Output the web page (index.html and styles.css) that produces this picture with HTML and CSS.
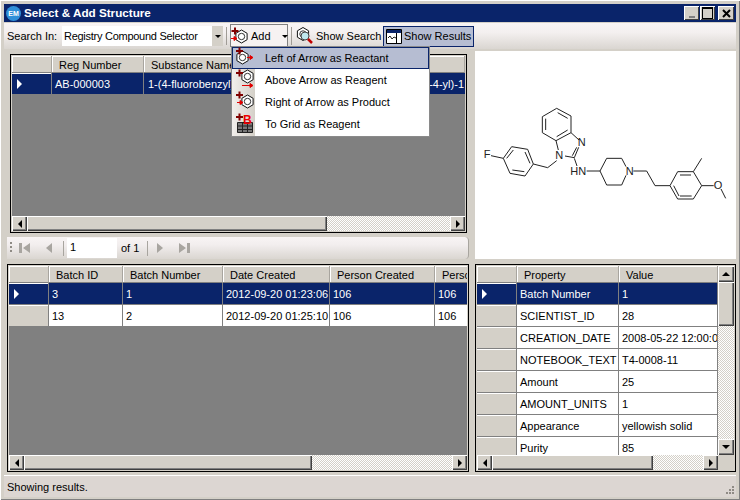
FILE: index.html
```html
<!DOCTYPE html>
<html lang="en">
<head>
    <meta charset="UTF-8">
    <title>Select &amp; Add Structure</title>
    <link rel="stylesheet" href="styles.css">
</head>
<body>
<svg class="defs" width="0" height="0">
    <defs>
        <g id="hex">
            <polygon points="0,-6.500 5.600,-3.200 5.600,3.200 0,6.500 -5.600,3.200 -5.600,-3.200" fill="#fff" stroke="#111"/>
            <circle r="3.200" fill="none" stroke="#333"/>
        </g>
        <path id="plus" d="M-3.500 0h7M0 -3.500v7" stroke="#800000" stroke-width="2" fill="none"/>
    </defs>
</svg>
<div class="window">
    <div class="titlebar">
        <span class="app-icon">EM</span>
        <span class="title-text">Select &amp; Add Structure</span>
        <span class="win-btn win-min"></span>
        <span class="win-btn win-max"></span>
        <span class="win-btn win-close">
            <svg width="9" height="9"><path d="M1 1l7 7M8 1l-7 7" stroke="#000" stroke-width="2"/></svg>
        </span>
    </div>

    <div class="toolbar">
        <span class="search-label">Search In:</span>
        <div class="combo">
            <span class="combo-text">Registry Compound Selector</span>
            <span class="combo-btn"><i class="tri-small"></i></span>
        </div>
        <span class="tool-sep"></span>
        <div class="add-wrap">
            <div class="add-btn">
                <svg width="20" height="20">
                    <use href="#hex" x="10.500" y="10.500"/><use href="#plus" x="4" y="5"/>
                    <path d="M0 12.500h4M3 10.500l3 2-3 2z" stroke="#e00000" fill="#e00000"/>
                </svg>
                <span>Add</span>
                <i class="tri-small"></i>
            </div>
            <ul class="menu">
                <li class="menu-item selected">
                    <svg width="20" height="20">
                        <use href="#hex" x="8.500" y="10.500"/><use href="#plus" x="5.500" y="4"/>
                        <path d="M13 10.500h4M16 8.500l3 2-3 2z" stroke="#e00000" fill="#e00000"/>
                    </svg>
                    <span>Left of Arrow as Reactant</span>
                </li>
                <li class="menu-item">
                    <svg width="20" height="20">
                        <use href="#hex" x="13.500" y="7.500"/><use href="#plus" x="5.500" y="4"/>
                        <path d="M8 16.500h9M16 14.500l3 2-3 2z" stroke="#e00000" fill="#e00000"/>
                    </svg>
                    <span>Above Arrow as Reagent</span>
                </li>
                <li class="menu-item">
                    <svg width="20" height="20">
                        <use href="#hex" x="13.500" y="10.500"/><use href="#plus" x="5.500" y="4"/>
                        <path d="M3 11.500h4M6 9.500l3 2-3 2z" stroke="#e00000" fill="#e00000"/>
                    </svg>
                    <span>Right of Arrow as Product</span>
                </li>
                <li class="menu-item">
                    <svg width="20" height="20">
                        <path d="M3.500 9.500h15v10h-15zM3.500 13h15M3.500 16.500h15M8.500 9.500v10M13.500 9.500v10" fill="#777" stroke="#222"/>
                        <use href="#plus" x="5.500" y="4"/>
                        <text class="icon-b" x="9" y="11">B</text>
                    </svg>
                    <span>To Grid as Reagent</span>
                </li>
            </ul>
        </div>
        <span class="tool-sep sep-after-add"></span>
        <div class="tool-btn show-search">
            <svg width="18" height="20">
                <use href="#hex" x="7" y="8"/>
                <circle cx="9" cy="10" r="4" fill="#bfe8ee" stroke="#444"/>
                <path d="M12 13l4 4" stroke="#c00000" stroke-width="2.500"/>
            </svg>
            <span>Show Search</span>
        </div>
        <div class="tool-btn show-results">
            <svg width="16" height="15">
                <path d="M.5 .5h15v14h-15z" fill="#fff" stroke="#000"/>
                <path d="M1 1h14v3h-14z" fill="#0a246a"/>
                <path d="M10.500 4v10" stroke="#000"/>
                <path d="M2 9l2-2 2 3 2-2 2 1" stroke="#222" fill="none"/>
            </svg>
            <span>Show Results</span>
        </div>
    </div>

    <div class="panes">
        <div class="left-top">
            <div class="datagrid grid-top">
                <div class="grid-view">
                    <div class="rows">
                        <div class="row head">
                            <div class="hcell"></div>
                            <div class="hcell">Reg Number</div>
                            <div class="hcell">Substance Name</div>
                        </div>
                        <div class="row selected">
                            <div class="rowhead"></div>
                            <div class="cell">AB-000003</div>
                            <div class="cell cell-split"><span>1-(4-fluorobenzyl)-</span><span>n-4-yl)-1</span></div>
                        </div>
                    </div>
                    <div class="hscroll">
                        <span class="sb-btn"><i class="tri-left"></i></span>
                        <span class="sb-thumb thumb-top"></span>
                        <span class="sb-track"></span>
                        <span class="sb-btn"><i class="tri-right"></i></span>
                    </div>
                </div>
            </div>
            <div class="pager">
                <span class="grip"></span>
                <svg class="pg-icon" width="11" height="12"><path d="M0 1h3v10h-3zM11 1v10l-7-5z" fill="#a8a5a0"/></svg>
                <svg class="pg-icon pg-prev" width="8" height="12"><path d="M7 1v10l-6-5z" fill="#a8a5a0"/></svg>
                <span class="pg-sep"></span>
                <span class="pg-input">1</span>
                <span class="pg-of">of 1</span>
                <span class="pg-sep pg-sep2"></span>
                <svg class="pg-icon pg-next" width="7" height="12"><path d="M0 1v10l6-5z" fill="#a8a5a0"/></svg>
                <svg class="pg-icon pg-last" width="11" height="12"><path d="M0 1v10l7-5zM8 1h3v10h-3z" fill="#a8a5a0"/></svg>
            </div>
        </div>

        <div class="structure">
            <svg class="molecule" width="259" height="130" viewBox="0 0 777 390">
                <g class="bonds">
                    <path d="M245 55L288 78L288 128L243 152L202 128L202 80Z"/>
                    <path d="M248 68L278 85M278 120L245 140M212 120L212 86"/>
                    <path d="M288 128L312 150M311 172L298 203L270 198M243 152L250 180M292 197L305 172"/>
                    <path d="M298 205L306 228M335 243L375 243L395 205L440 205L453 230M375 243L395 285L440 285L453 256"/>
                    <path d="M475 243L515 243L540 287L585 287L608 245L655 245L680 287L655 327L608 327L585 287"/>
                    <path d="M615 255L648 255M650 318L615 318M596 287L612 318M655 245L680 205M680 287L716 287M738 297L752 325"/>
                    <path d="M245 212L218 233L175 222L150 258L105 250L85 205L110 170L158 178L175 222"/>
                    <path d="M148 245L112 240M95 205L115 180M150 186L165 220M48 197L85 205"/>
                </g>
                <text x="308" y="169">N</text>
                <text x="241" y="208">N</text>
                <text x="286" y="254">HN</text>
                <text x="452" y="254">N</text>
                <text x="716" y="296">O</text>
                <text x="26" y="204">F</text>
            </svg>
        </div>

        <div class="datagrid grid-batch">
            <div class="grid-view">
                <div class="rows">
                    <div class="row head">
                        <div class="hcell"></div>
                        <div class="hcell">Batch ID</div>
                        <div class="hcell">Batch Number</div>
                        <div class="hcell">Date Created</div>
                        <div class="hcell">Person Created</div>
                        <div class="hcell">Person Modified</div>
                    </div>
                    <div class="row selected">
                        <div class="rowhead"></div>
                        <div class="cell">3</div>
                        <div class="cell">1</div>
                        <div class="cell">2012-09-20 01:23:06</div>
                        <div class="cell">106</div>
                        <div class="cell">106</div>
                    </div>
                    <div class="row">
                        <div class="rowhead"></div>
                        <div class="cell">13</div>
                        <div class="cell">2</div>
                        <div class="cell">2012-09-20 01:25:10</div>
                        <div class="cell">106</div>
                        <div class="cell">106</div>
                    </div>
                </div>
                <div class="hscroll">
                    <span class="sb-btn"><i class="tri-left"></i></span>
                    <span class="sb-thumb thumb-batch"></span>
                    <span class="sb-track"></span>
                    <span class="sb-btn"><i class="tri-right"></i></span>
                </div>
            </div>
        </div>

        <div class="datagrid grid-props">
            <div class="grid-view">
                <div class="props-body">
                    <div class="rows">
                        <div class="row head">
                            <div class="hcell"></div>
                            <div class="hcell">Property</div>
                            <div class="hcell">Value</div>
                        </div>
                        <div class="row selected"><div class="rowhead"></div><div class="cell">Batch Number</div><div class="cell">1</div></div>
                        <div class="row"><div class="rowhead"></div><div class="cell">SCIENTIST_ID</div><div class="cell">28</div></div>
                        <div class="row"><div class="rowhead"></div><div class="cell">CREATION_DATE</div><div class="cell">2008-05-22 12:00:00</div></div>
                        <div class="row"><div class="rowhead"></div><div class="cell">NOTEBOOK_TEXT</div><div class="cell">T4-0008-11</div></div>
                        <div class="row"><div class="rowhead"></div><div class="cell">Amount</div><div class="cell">25</div></div>
                        <div class="row"><div class="rowhead"></div><div class="cell">AMOUNT_UNITS</div><div class="cell">1</div></div>
                        <div class="row"><div class="rowhead"></div><div class="cell">Appearance</div><div class="cell">yellowish solid</div></div>
                        <div class="row"><div class="rowhead"></div><div class="cell">Purity</div><div class="cell">85</div></div>
                    </div>
                    <div class="vscroll">
                        <span class="sb-btn"><i class="tri-up"></i></span>
                        <span class="sb-thumb thumb-props"></span>
                        <span class="sb-track"></span>
                        <span class="sb-btn"><i class="tri-down"></i></span>
                    </div>
                </div>
                <div class="props-foot">
                    <div class="hscroll">
                        <span class="sb-btn"><i class="tri-left"></i></span>
                        <span class="sb-thumb thumb-props-h"></span>
                        <span class="sb-track"></span>
                        <span class="sb-btn"><i class="tri-right"></i></span>
                    </div>
                    <span class="sb-corner"></span>
                </div>
            </div>
        </div>
    </div>

    <div class="statusbar">
        <span>Showing results.</span>
        <svg class="size-grip" width="12" height="12">
            <path d="M9 1h2v2h-2zM6 4h2v2h-2zM9 4h2v2h-2zM3 7h2v2h-2zM6 7h2v2h-2zM9 7h2v2h-2z" fill="#8f8b85"/>
        </svg>
    </div>
</div>
</body>
</html>
```

FILE: styles.css
```css
*{
    margin:0;
    padding:0;
    box-sizing:border-box;
}
body{
    background:#d4d0c8;
    font-family:"Liberation Sans",Arial,sans-serif;
    font-size:11px;
    color:#000;
}
ul{
    list-style:none;
}
.defs{
    position:absolute;
}
.window{
    width:740px;
    height:500px;
    padding:4px 4px 3px;
    background:#d4d0c8;
    display:flex;
    flex-direction:column;
    position:relative;
    box-shadow:inset 1px 1px 0 #fff,inset -1px -1px 0 #808080;
    overflow:hidden;
}

/* title bar */
.titlebar{
    height:18px;
    flex:none;
    background:#0a246a;
    color:#fff;
    display:flex;
    align-items:center;
    padding:0 2px;
}
.app-icon{
    width:15px;
    height:15px;
    border-radius:50%;
    background:#2f8fd8;
    color:#fff;
    font-size:7px;
    font-weight:bold;
    line-height:15px;
    text-align:center;
    margin-right:3px;
}
.title-text{
    font-weight:bold;
    font-size:11.7px;
    flex:1;
    padding-bottom:2px;
}
.win-btn{
    width:15px;
    height:14px;
    margin-left:1px;
    background:#d4d0c8;
    box-shadow:inset 1px 1px 0 #fff,inset -1px -1px 0 #404040;
    display:flex;
    align-items:center;
    justify-content:center;
    position:relative;
}
.win-min::after{
    content:"";
    width:6px;
    height:2px;
    background:#808080;
    margin-top:7px;
}
.win-max::after{
    content:"";
    width:9px;
    height:9px;
    border:1px solid #000;
    border-top-width:2px;
}
.win-close{
    width:16px;
    margin-left:3px;
}

/* toolbar */
.toolbar{
    height:26px;
    flex:none;
    margin-top:1px;
    padding-left:3px;
    display:flex;
    align-items:center;
    background:linear-gradient(#f8f4f4,#f4f0f0 35%,#dad6d1);
}
.toolbar svg{
    flex:none;
}
.search-label{
    width:55px;
}
.combo{
    width:161px;
    height:20px;
    display:flex;
    background:#fff;
}
.combo-text{
    flex:1;
    line-height:20px;
    padding-left:2px;
    letter-spacing:-.27px;
    white-space:nowrap;
}
.combo-btn{
    width:11px;
    background:#d4d0c8;
    display:flex;
    align-items:center;
    justify-content:center;
}
.tool-sep{
    width:1px;
    height:18px;
    background:#a09c96;
    margin:0 3px;
}
.add-wrap{
    position:relative;
    height:23px;
    align-self:flex-end;
    margin-bottom:2px;
}
.add-btn{
    width:58px;
    height:23px;
    border:1px solid #808080;
    border-bottom:none;
    background:#f6f2f2;
    display:flex;
    align-items:center;
}
.add-btn .tri-small{
    margin-left:11px;
}
.sep-after-add{
    margin:0 4px 0 3px;
}
.tool-btn{
    height:21px;
    display:flex;
    align-items:center;
    gap:2px;
    white-space:nowrap;
}
.show-search{
    width:83px;
    margin-right:4px;
}
.show-results{
    border:1px solid #0a246a;
    background:#b6bdd2;
    padding-left:2px;
    width:91px;
}

/* dropdown menu */
.menu{
    position:absolute;
    left:1px;
    top:22px;
    width:199px;
    height:91px;
    background:linear-gradient(90deg,#f2efec,#d4d0c8 23px,#fff 23px);
    border:1px solid #8a8a8a;
    z-index:5;
}
.menu-item{
    height:22px;
    display:flex;
    align-items:center;
    white-space:nowrap;
    border:1px solid transparent;
}
.menu-item svg{
    width:23px;
    height:22px;
    padding-left:1px;
    margin-right:9px;
    flex:none;
}
.menu-item.selected{
    background:#b6bdd2;
    border-color:#0a246a;
}
.icon-b{
    font-family:"Liberation Sans",Arial,sans-serif;
    font-size:12px;
    font-weight:bold;
    fill:#ee0000;
}

/* panes */
.panes{
    flex:none;
    margin:2px 0 0 3px;
    display:grid;
    grid-template-columns:462px 261px;
    grid-template-rows:208px 208px;
    column-gap:6px;
    row-gap:5px;
}
.left-top{
    display:flex;
    flex-direction:column;
    padding-top:3px;
}
.structure{
    background:#fff;
    padding-top:39px;
}
.molecule{
    display:block;
}
.bonds path{
    fill:none;
    stroke:#222;
    stroke-width:3;
}
.molecule text{
    font-family:"Liberation Sans",Arial,sans-serif;
    font-size:33px;
    fill:#222;
}

/* data grids */
.datagrid{
    border:1px solid #000;
    padding:1px;
    background:#d4d0c8;
}
.grid-top{
    height:179px;
    margin:0 2px 0 3px;
    flex:none;
}
.grid-view{
    height:100%;
    background:#808080;
    display:flex;
    flex-direction:column;
}
.rows{
    flex:1;
    min-height:0;
    min-width:0;
    overflow:hidden;
}
.row{
    display:grid;
    height:22px;
}
.grid-top .row{
    grid-template-columns:40px 92px 1fr;
}
.grid-batch .row{
    grid-template-columns:40px 74px 100px 107px 105px 100px;
    width:526px;
}
.grid-props .row{
    grid-template-columns:40px 102px 99px;
}
.row.head{
    height:17px;
}
.hcell{
    background:#d4d0c8;
    border-bottom:1px solid #808080;
    border-right:1px solid #a8a59f;
    box-shadow:inset 1px 1px 0 #fff;
    padding:2px 0 0 7px;
    line-height:14px;
    white-space:nowrap;
    overflow:hidden;
}
.cell{
    background:#fff;
    border-right:1px solid #808080;
    border-bottom:1px solid #808080;
    padding:1px 0 0 3px;
    line-height:20px;
    white-space:nowrap;
    overflow:hidden;
}
.row.selected .cell{
    background:#0a246a;
    color:#fff;
}
.cell-split{
    display:flex;
    justify-content:space-between;
    padding:1px 1px 0 4px;
    border-right:none;
}
.rowhead{
    background:#d4d0c8;
    border-right:1px solid #808080;
    border-bottom:1px solid #808080;
    box-shadow:inset 0 1px 0 #fff;
    position:relative;
}
.row.selected .rowhead{
    background:#0a246a;
}
.row.selected .rowhead::after{
    content:"";
    position:absolute;
    left:5px;
    top:6px;
    border-left:5px solid #fff;
    border-top:5px solid transparent;
    border-bottom:5px solid transparent;
}

/* scrollbars */
.hscroll{
    height:15px;
    flex:none;
    display:flex;
}
.vscroll{
    width:16px;
    flex:none;
    display:flex;
    flex-direction:column;
}
.sb-btn,.sb-thumb,.sb-corner{
    background:#d4d0c8;
    flex:none;
}
.sb-btn,.sb-thumb{
    box-shadow:inset 1px 1px 0 #fff,inset -1px -1px 0 #404040,inset -2px -2px 0 #808080;
}
.sb-btn{
    width:15px;
    height:15px;
    display:flex;
    align-items:center;
    justify-content:center;
}
.vscroll .sb-btn{
    width:16px;
    height:16px;
}
.sb-track{
    flex:1;
    background:repeating-conic-gradient(#fff 0 25%,#d4d0c8 0 50%) 0 0/2px 2px;
}
.thumb-top{
    width:300px;
}
.thumb-batch{
    width:288px;
}
.thumb-props{
    height:44px;
}
.thumb-props-h{
    width:161px;
}
.props-body{
    flex:1;
    min-height:0;
    display:flex;
}
.props-foot{
    display:flex;
    flex:none;
}
.props-foot .hscroll{
    flex:1;
}
.sb-corner{
    width:16px;
}
.tri-small{
    width:0;
    height:0;
    border-left:3px solid transparent;
    border-right:3px solid transparent;
    border-top:3px solid #000;
}
.tri-down{
    width:0;
    height:0;
    border-left:4px solid transparent;
    border-right:4px solid transparent;
    border-top:4px solid #000;
}
.tri-up{
    width:0;
    height:0;
    border-left:4px solid transparent;
    border-right:4px solid transparent;
    border-bottom:4px solid #000;
}
.tri-left{
    width:0;
    height:0;
    border-top:4px solid transparent;
    border-bottom:4px solid transparent;
    border-right:4px solid #000;
}
.tri-right{
    width:0;
    height:0;
    border-top:4px solid transparent;
    border-bottom:4px solid transparent;
    border-left:4px solid #000;
}

/* pager */
.pager{
    height:22px;
    margin-top:4px;
    flex:none;
    display:flex;
    align-items:center;
    background:linear-gradient(#f8f4f4,#f2eeee 35%,#dad6d1);
    border-radius:0 4px 4px 0;
    border-right:1px solid #a8a59f;
    padding-left:3px;
}
.grip{
    width:2px;
    height:12px;
    margin-right:7px;
    background:repeating-linear-gradient(#8f8b85 0 2px,transparent 2px 4px);
}
.pg-prev{
    margin-left:15px;
}
.pg-sep{
    width:1px;
    height:15px;
    background:#a8a59f;
    margin:0 3px 0 10px;
}
.pg-sep2{
    margin:0;
}
.pg-input{
    width:50px;
    height:20px;
    background:#fff;
    line-height:18px;
    padding-left:3px;
}
.pg-of{
    margin-left:4px;
    width:26px;
}
.pg-next{
    margin-left:9px;
}
.pg-last{
    margin-left:15px;
}

/* status bar */
.statusbar{
    height:22px;
    flex:none;
    margin-top:3px;
    border-top:1px solid #fff;
    background:#dcd6d2;
    display:flex;
    align-items:center;
    justify-content:space-between;
    padding:0 1px 0 3px;
}
.size-grip{
    align-self:flex-end;
}
```
